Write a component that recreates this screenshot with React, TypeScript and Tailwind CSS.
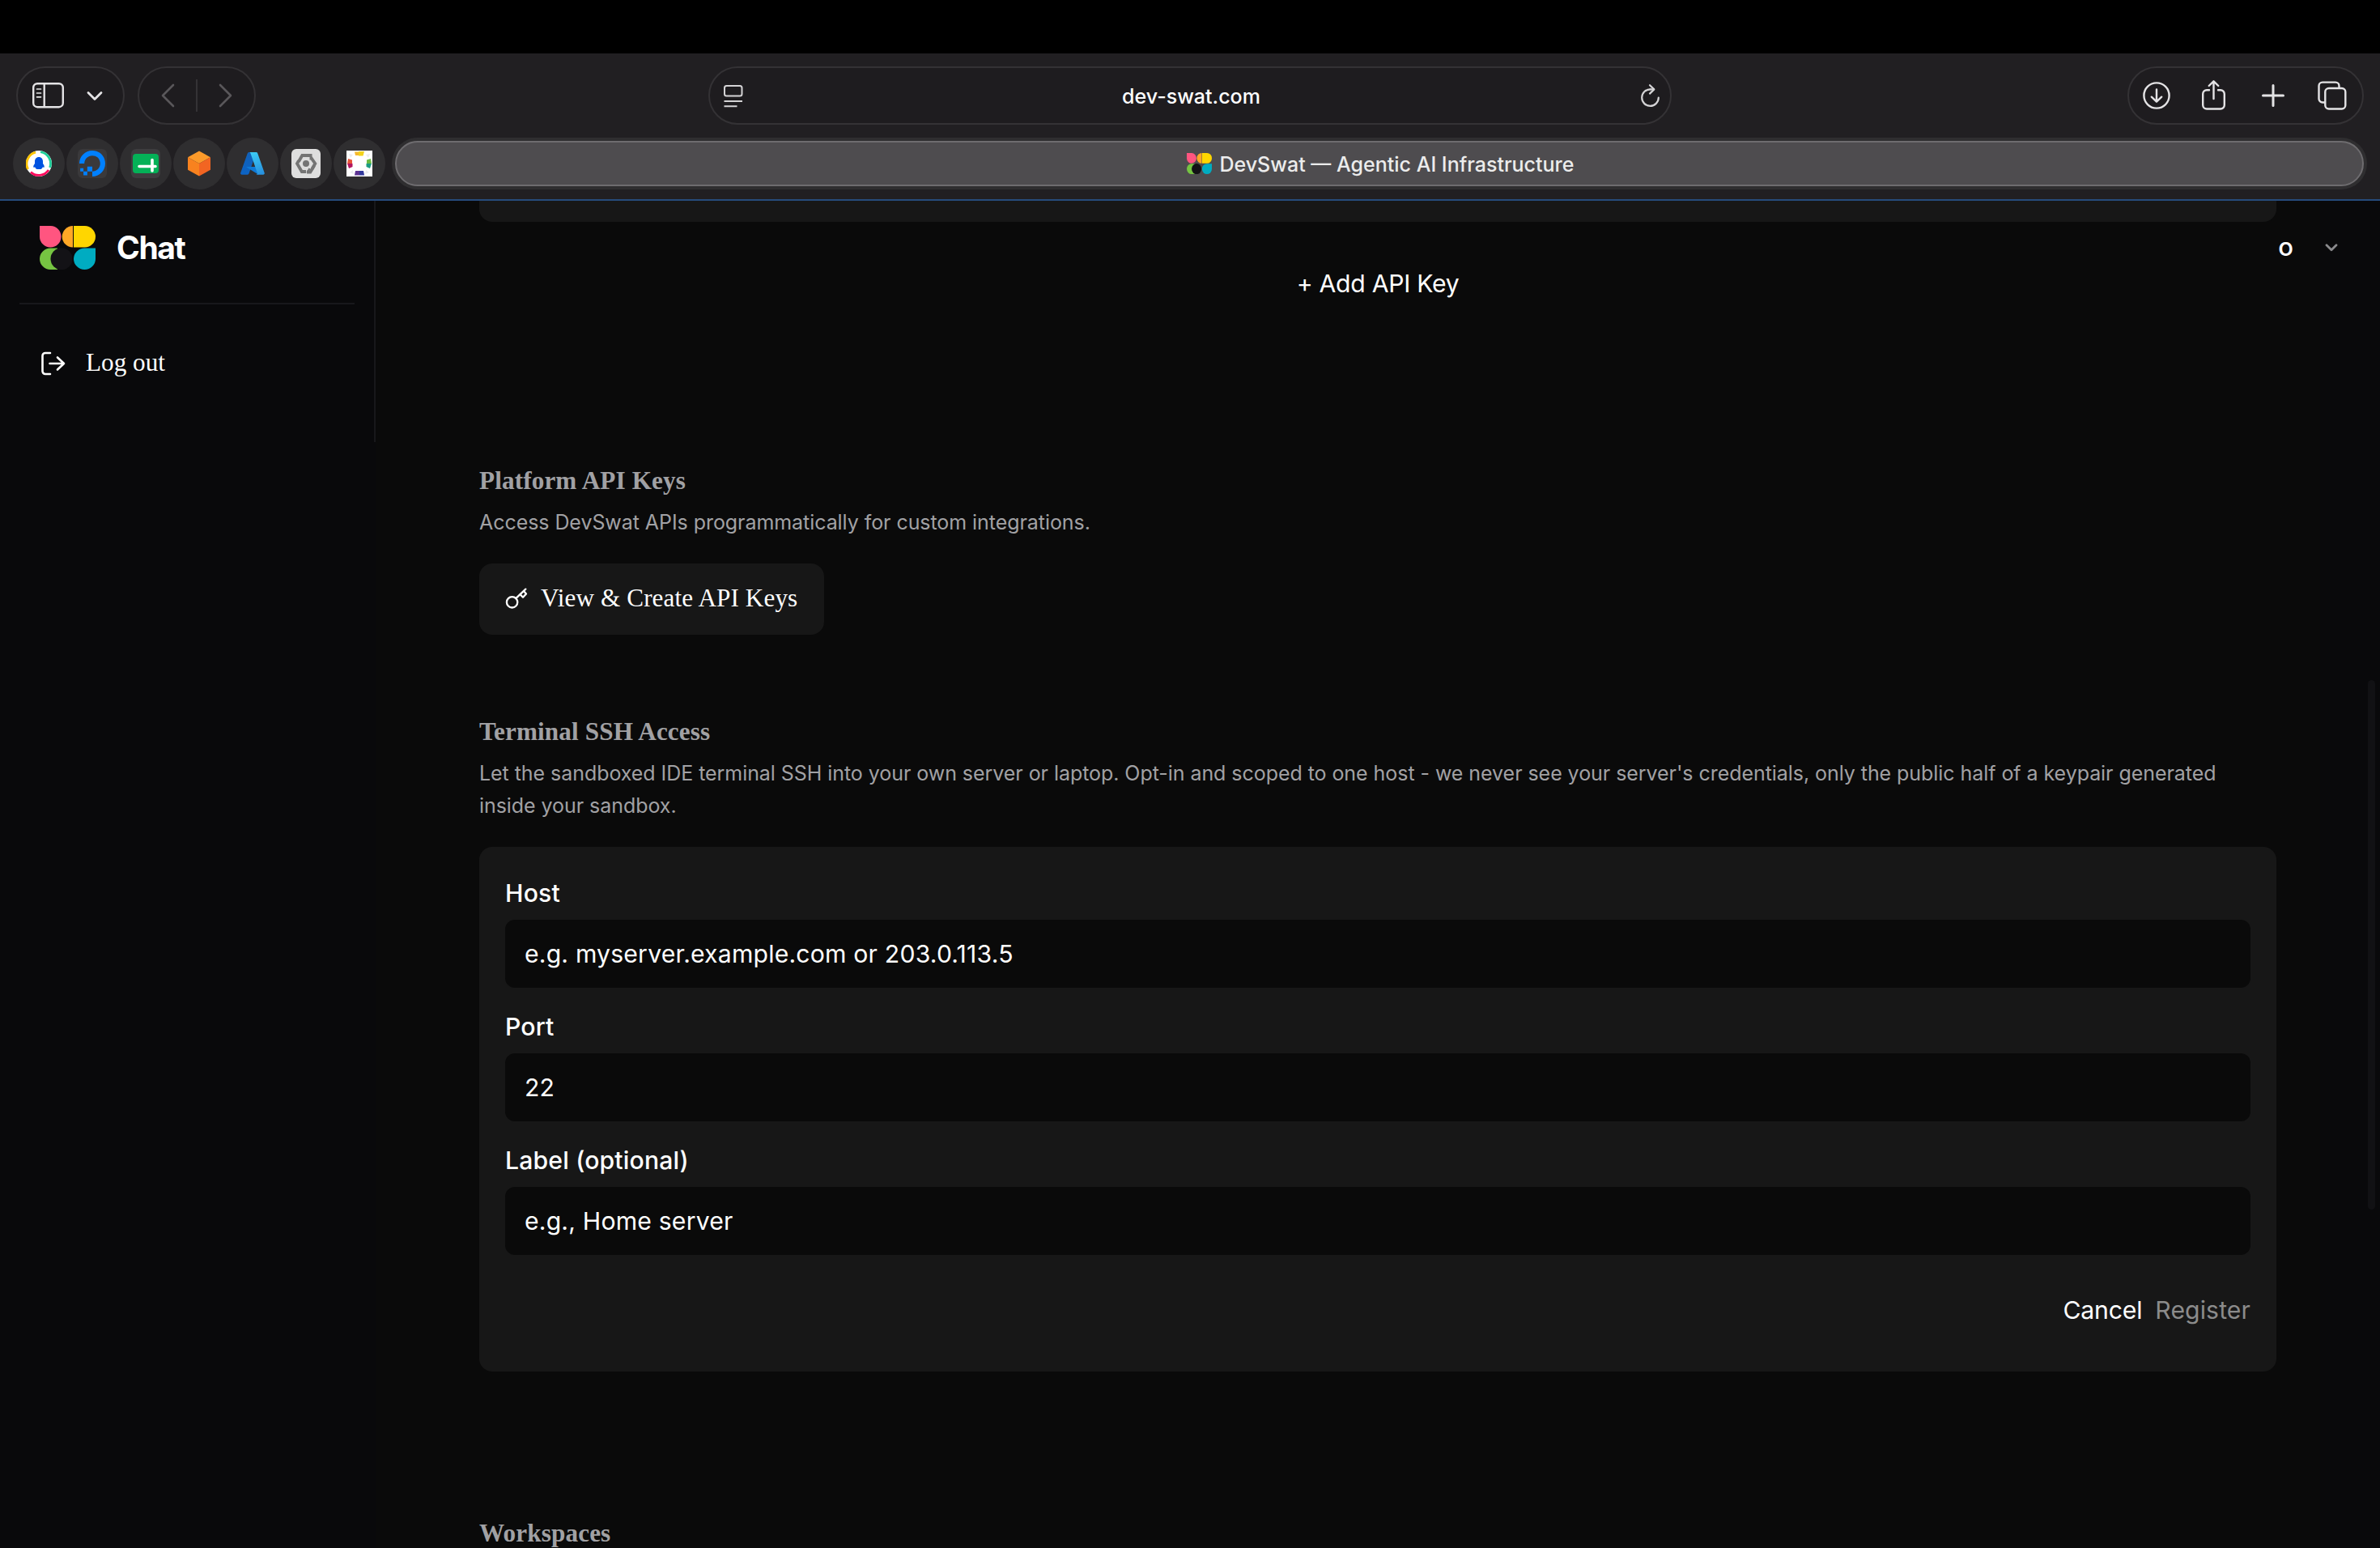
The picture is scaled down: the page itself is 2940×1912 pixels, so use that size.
import type { ReactNode } from "react";
import { SiDigitalocean } from "react-icons/si";

function Logo({ className }: { className: string }) {
  return (
    <svg viewBox="0 0 69 54" preserveAspectRatio="none" className={className}>
      <path d="M0 0H13.5A13.25 13.25 0 1 1 0 13.25Z" fill="#ff5580" />
      <path d="M41 0A13.25 13.25 0 0 0 41 26.5Z" fill="#ffa726" />
      <path d="M42 0H55.75A13.25 13.25 0 0 1 55.75 26.5H42Z" fill="#ffd600" />
      <path d="M22 27.5H13.25A13.25 13.25 0 0 0 13.25 54H22Z" fill="#76c442" />
      <circle cx="27" cy="40.75" r="13.5" fill="#131216" />
      <path d="M69 27.5V40.75A13.5 13.25 0 1 1 55.5 27.5Z" fill="#00acc1" />
    </svg>
  );
}

function Pill({ className, children }: { className: string; children: ReactNode }) {
  return (
    <div className={`flex h-[72px] items-center rounded-full border-2 border-[#343235] bg-[#1e1c1f] ${className}`}>
      {children}
    </div>
  );
}

function PinnedTab({ children }: { children: ReactNode }) {
  return (
    <div className="flex size-16 shrink-0 items-center justify-center rounded-full bg-[#2f2e30]">{children}</div>
  );
}

function Toolbar() {
  return (
    <div className="flex h-[104px] items-center px-5 text-[#e4e3e5]">
      <Pill className="w-[134px] pl-[18px]">
        <svg width="40" height="32" viewBox="0 0 40 32" fill="none" stroke="currentColor" strokeWidth="2.4">
          <rect x="1.2" y="1.2" width="36.6" height="29" rx="5" />
          <path d="M14.7 1v29" />
          <path d="M5.5 8h5M5.5 13h5M5.5 17.8h5" strokeWidth="1.7" strokeLinecap="round" />
        </svg>
        <svg width="20" height="14" viewBox="0 0 20 14" fill="none" stroke="currentColor" strokeWidth="2.8" strokeLinecap="round" strokeLinejoin="round" className="ml-[27px]">
          <path d="M2 3.5l8 8 8-8" />
        </svg>
      </Pill>
      <Pill className="ml-4 w-[146px] pl-[27px] text-[#59575a]">
        <svg width="20" height="30" viewBox="0 0 20 30" fill="none" stroke="currentColor" strokeWidth="2.6" strokeLinecap="round" strokeLinejoin="round">
          <path d="M15 2L2 15l13 13" />
        </svg>
        <div className="ml-[23px] h-10 w-0.5 bg-[#343235]" />
        <svg width="20" height="30" viewBox="0 0 20 30" fill="none" stroke="currentColor" strokeWidth="2.6" strokeLinecap="round" strokeLinejoin="round" className="ml-[25px]">
          <path d="M3 2l13 13L3 28" />
        </svg>
      </Pill>
      <Pill className="ml-[559px] w-[1190px] justify-between pr-[11px] pl-[17px]">
        <svg width="24" height="30" viewBox="0 0 24 30" fill="none" stroke="#d5d4d6" strokeWidth="2">
          <rect x="1" y="3" width="21.5" height="12.5" rx="2.5" />
          <path d="M0.5 22h22.5M0.5 28.3h16" />
        </svg>
        <span className="pt-[3px] pr-px text-[25px] font-medium text-white">dev-swat.com</span>
        <svg width="26" height="30" viewBox="0 0 26 30" fill="none" stroke="#d5d4d6" strokeWidth="2.2" strokeLinecap="round" strokeLinejoin="round">
          <path d="M12.5 7.3A10.3 10.3 0 1 0 22.8 17.6" />
          <path d="M12 2.2l5.3 5.2-5.3 5.2" />
          <path d="M12.5 7.3h4.5" />
        </svg>
      </Pill>
      <Pill className="ml-auto w-[292px] pl-[17px]">
        <svg width="36" height="36" viewBox="0 0 36 36" fill="none" stroke="currentColor" strokeWidth="2.4" strokeLinecap="round" strokeLinejoin="round">
          <circle cx="17" cy="18" r="15.6" />
          <path d="M17 10.5v15M10.8 19.7l6.2 6 6.2-6" />
        </svg>
        <svg width="32" height="40" viewBox="0 0 32 40" fill="none" stroke="currentColor" strokeWidth="2.4" strokeLinecap="round" strokeLinejoin="round" className="ml-[36px]">
          <path d="M10 13.2H7A4.8 4.8 0 0 0 2.2 18v13.7A4.8 4.8 0 0 0 7 36.5h17a4.8 4.8 0 0 0 4.8-4.8V18a4.8 4.8 0 0 0-4.8-4.8h-3" />
          <path d="M15.5 24V2.5M9.7 8l5.8-5.7L21.3 8" />
        </svg>
        <svg width="28" height="28" viewBox="0 0 28 28" fill="none" stroke="currentColor" strokeWidth="3" strokeLinecap="round" className="ml-[43px]">
          <path d="M14 1.5v25M1.5 14h25" />
        </svg>
        <svg width="36" height="36" viewBox="0 0 36 36" fill="none" stroke="currentColor" strokeWidth="2.4" className="ml-[41px]">
          <rect x="9.3" y="9" width="25" height="25.5" rx="4.5" />
          <path d="M9.5 26.5H6A4.5 4.5 0 0 1 1.5 22V6A4.5 4.5 0 0 1 6 1.6h16A4.5 4.5 0 0 1 26.5 6v3" />
        </svg>
      </Pill>
    </div>
  );
}

function TabBar() {
  return (
    <div className="flex h-16 gap-0.5 pr-4 pl-4">
      <PinnedTab>
        <svg width="32" height="32" viewBox="0 0 32 32" fill="none">
          <circle cx="16" cy="16" r="16" fill="#fff" />
          <path d="M2.6 23A14.6 14.6 0 0 1 12 2.2" stroke="#ffc400" strokeWidth="2.8" />
          <path d="M18 1.6A14.6 14.6 0 0 1 29.6 21" stroke="#1fcf9a" strokeWidth="2.8" />
          <path d="M28 24A14.6 14.6 0 0 1 6 26.6" stroke="#ff0a5c" strokeWidth="2.8" />
          <path d="M16 8c-3.2 0-5 2.4-5 5.5V16c-1.2 1.5-2 3-1.7 4.8l2-.4c.5 1.5 1.5 2.4 2.5 2.6h4.4c1-.2 2-1.1 2.5-2.6l2 .4c.3-1.8-.5-3.3-1.7-4.8v-2.5C21 10.4 19.2 8 16 8z" fill="#0052e0" />
        </svg>
      </PinnedTab>
      <PinnedTab>
        <div className="flex size-9 items-center justify-center rounded-md bg-[#3a393b]">
          <SiDigitalocean className="size-8 text-[#0080ff]" />
        </div>
      </PinnedTab>
      <PinnedTab>
        <div className="flex size-9 items-center justify-center rounded-md bg-[#3e3d3f]">
          <svg width="32" height="24" viewBox="0 0 32 24">
            <rect width="32" height="24" rx="4" fill="#04b157" />
            <path d="M8 15.5h20M24 7.5V21" stroke="#fff" strokeWidth="3.6" strokeLinecap="round" />
          </svg>
        </div>
      </PinnedTab>
      <PinnedTab>
        <svg width="28" height="32" viewBox="0 0 28 32">
          <path d="M14 .5L28 8.2 14 16 0 8.2z" fill="#fc9a2a" />
          <path d="M0 8.2L14 16v15.5L0 23.7z" fill="#f8821f" />
          <path d="M28 8.2L14 16v15.5l14-7.8z" fill="#f26522" />
        </svg>
      </PinnedTab>
      <PinnedTab>
        <svg width="30" height="28" viewBox="0 0 30 28">
          <defs>
            <linearGradient id="azureLeft" x1="0.6" y1="0" x2="0.3" y2="1">
              <stop offset="0" stopColor="#1160b7" />
              <stop offset="1" stopColor="#0c63c4" />
            </linearGradient>
            <linearGradient id="azureRight" x1="0.3" y1="0" x2="0.6" y2="1">
              <stop offset="0" stopColor="#3ccbf4" />
              <stop offset="1" stopColor="#2892df" />
            </linearGradient>
          </defs>
          <path d="M10.5 0h9L10.6 26.3a2 2 0 0 1-1.9 1.4H1.9a1.7 1.7 0 0 1-1.7-2.3L8.7 1.4A2 2 0 0 1 10.5 0z" fill="url(#azureLeft)" />
          <path d="M7.5 18h12l3 9.7L9 19.6c-1-.6-1.8-1.4-1.5-1.6z" fill="#0f7ad6" />
          <path d="M21.3 1.4A2 2 0 0 0 19.4 0H10.7c.8 0 1.5.5 1.8 1.4l8.3 24a1.7 1.7 0 0 1-1.6 2.3h8.8a1.7 1.7 0 0 0 1.7-2.3z" fill="url(#azureRight)" />
        </svg>
      </PinnedTab>
      <PinnedTab>
        <div className="flex size-9 items-center justify-center rounded-md bg-[#dedede]">
          <svg width="28" height="26" viewBox="0 0 28 26" fill="none" stroke="#747474" strokeWidth="3.8">
            <path d="M5 10.5L9.3 3h12.2" />
            <path d="M18.5 6.5h2.2L25.3 13l-3.7 6.5" />
            <path d="M24.2 15.5l-4.9 8H15" />
            <path d="M18.5 19l-3 5.5" strokeWidth="2.5" />
            <path d="M14 23H8.8L3 13l2-3.5" />
            <circle cx="14" cy="13" r="4" fill="#747474" stroke="none" />
          </svg>
        </div>
      </PinnedTab>
      <PinnedTab>
        <svg width="32" height="32" viewBox="0 0 32 32">
          <defs>
            <filter id="soft">
              <feGaussianBlur stdDeviation="0.7" />
            </filter>
          </defs>
          <rect width="32" height="32" fill="#fff" />
          <g filter="url(#soft)">
            <path d="M10 1.5h5V6h-4z" fill="#f5b82e" />
            <path d="M15 1h7l-1.5 5.5H15z" fill="#f3d21b" />
            <path d="M2 10l5 1.5V16H1z" fill="#e8573a" />
            <path d="M1 16h6.5v4L3 22z" fill="#b3125f" />
            <path d="M30 10l-5 1.5V16h6z" fill="#6dbb45" />
            <path d="M31 16h-6.500v4l4.500 2z" fill="#1f9c83" />
            <path d="M11 25h5v5.5h-6z" fill="#5c3391" />
            <path d="M16 25h5l1 5.5h-6z" fill="#33389c" />
            <path d="M3 4l5 1-3 4zM29 4l-5 1 3 4zM4 27l4-3 1 5zM28 27l-4-3-1 5z" fill="#ececf0" />
          </g>
        </svg>
      </PinnedTab>
      {/* Active tab */}
      <div className="ml-1.5 flex-1 rounded-full bg-[#2f2e30] p-1">
        <div className="flex h-14 items-center justify-center rounded-full border-2 border-[#6e6c6f] bg-[#4e4c4f]">
          <Logo className="mr-2.5 ml-0.5 h-[26px] w-[31px]" />
          <span className="pt-[3px] text-[25px] font-medium text-[#ececec]">DevSwat — Agentic AI Infrastructure</span>
        </div>
      </div>
    </div>
  );
}

function Sidebar() {
  return (
    <aside className="h-[298px] w-[464px] shrink-0 border-r-2 border-[#18181b] px-6 text-white">
      <div className="flex h-32 items-center border-b-2 border-[#18181b] pb-[42px] pl-[25px]">
        <Logo className="mt-[31px] h-[54px] w-[69px]" />
        <span className="mt-8 ml-[26px] text-[39px] leading-[54px] font-bold tracking-[-1.4px]">Chat</span>
      </div>
      <div className="mt-[49px] flex h-12 items-center pl-[26px]">
        <svg width="32" height="32" viewBox="0 0 32 32" fill="none" stroke="currentColor" strokeWidth="2.6" strokeLinecap="round" strokeLinejoin="round">
          <path d="M12 3H6a3.5 3.5 0 0 0-3.500 3.500v19A3.500 3.500 0 0 0 6 29h6" />
          <path d="M11.5 16H29M21 8.500l8 7.500-8 7.500" />
        </svg>
        <span className="mb-0.5 ml-6 font-['Liberation_Serif',serif] text-[31.2px] leading-[48px]">Log out</span>
      </div>
    </aside>
  );
}

function SectionHeading({ className, children }: { className: string; children: ReactNode }) {
  return (
    <h2 className={`font-['Liberation_Serif',serif] text-[31.2px] leading-[48px] font-bold tracking-[0.12px] text-[#a1a1a4] ${className}`}>
      {children}
    </h2>
  );
}

function Field({ label, text }: { label: string; text: string }) {
  return (
    <div>
      <div className="mb-[13px] pt-px text-[30.2px] leading-10 font-medium tracking-[0.15px]">{label}</div>
      <div className="flex h-[84px] items-center rounded-xl bg-[#0a0a0a] px-6 pt-0.5 text-[30.2px] tracking-[0.18px]">
        {text}
      </div>
    </div>
  );
}

function Settings() {
  return (
    <main className="w-[2220px] text-white">
      <div className="h-[26px] rounded-b-2xl bg-[#171717]" />
      <div className="mt-[52px] text-center text-[30.2px] leading-[48px] tracking-[-0.3px]">+ Add API Key</div>

      <SectionHeading className="mt-[196px]">Platform API Keys</SectionHeading>
      <p className="mt-[7px] text-[25px] leading-10 tracking-[-0.06px] text-[#a1a1a4]">
        Access DevSwat APIs programmatically for custom integrations.
      </p>
      <div className="mt-[31px] flex h-[88px] w-[426px] items-center rounded-2xl bg-[#171717] pl-8">
        <svg width="28" height="28" viewBox="0 0 28 28" fill="none" stroke="currentColor" strokeWidth="2.3" strokeLinecap="round" strokeLinejoin="round">
          <circle cx="8.6" cy="17.8" r="6.7" />
          <path d="M13.5 12.8L25.3 1.6" />
          <path d="M18.7 8.4l3.3 3.3 4-4.2-3-3.400" />
        </svg>
        <span className="mb-0.5 ml-4 font-['Liberation_Serif',serif] text-[31.2px] leading-[48px] tracking-[0.1px]">
          View &amp; Create API Keys
        </span>
      </div>

      <SectionHeading className="mt-24">Terminal SSH Access</SectionHeading>
      <p className="mt-[7px] text-[25px] leading-10 tracking-[-0.055px] text-[#a1a1a4]">
        Let the sandboxed IDE terminal SSH into your own server or laptop. Opt-in and scoped to one host - we never see
        your server's credentials, only the public half of a keypair generated inside your sandbox.
      </p>
      <div className="mt-[31px] h-[648px] rounded-2xl bg-[#171717] px-8 pt-9">
        <div className="flex flex-col gap-[27px]">
          <Field label="Host" text="e.g. myserver.example.com or 203.0.113.5" />
          <Field label="Port" text="22" />
          <Field label="Label (optional)" text="e.g., Home server" />
        </div>
        <div className="mt-12 flex justify-end gap-4 text-[30.2px] leading-10">
          <span className="tracking-[-0.2px]">Cancel</span>
          <span className="tracking-[0.1px] text-[#8b8b8b]">Register</span>
        </div>
      </div>

      <SectionHeading className="mt-44">Workspaces</SectionHeading>
    </main>
  );
}

export default function App() {
  return (
    <div className="flex h-[1912px] w-[2940px] flex-col overflow-hidden bg-black font-['Inter',sans-serif]">
      <div className="h-[66px] shrink-0" />
      <header className="h-[182px] shrink-0 border-b-2 border-[#264b7c] bg-[#211f22]">
        <Toolbar />
        <TabBar />
      </header>
      <div className="relative flex min-h-0 flex-1 bg-[#09090b]">
        <Sidebar />
        <div className="flex min-w-0 flex-1 items-start bg-[#0a0a0a] pl-32">
          <Settings />
        </div>
        <div className="w-[74px] shrink-0" />

        {/* User menu */}
        <div className="absolute top-[33px] right-[52px] flex h-12 items-center">
          <span className="text-[31px] font-medium text-white">o</span>
          <svg width="16" height="10" viewBox="0 0 16 10" fill="none" stroke="#8a8a8d" strokeWidth="2.8" strokeLinecap="round" strokeLinejoin="round" className="mt-0.5 ml-[39px]">
            <path d="M2 1.7l6 6 6-6" />
          </svg>
        </div>
        <div className="absolute top-[592px] right-1.5 h-[654px] w-[9px] rounded-full bg-[#111114]" />
      </div>
    </div>
  );
}
